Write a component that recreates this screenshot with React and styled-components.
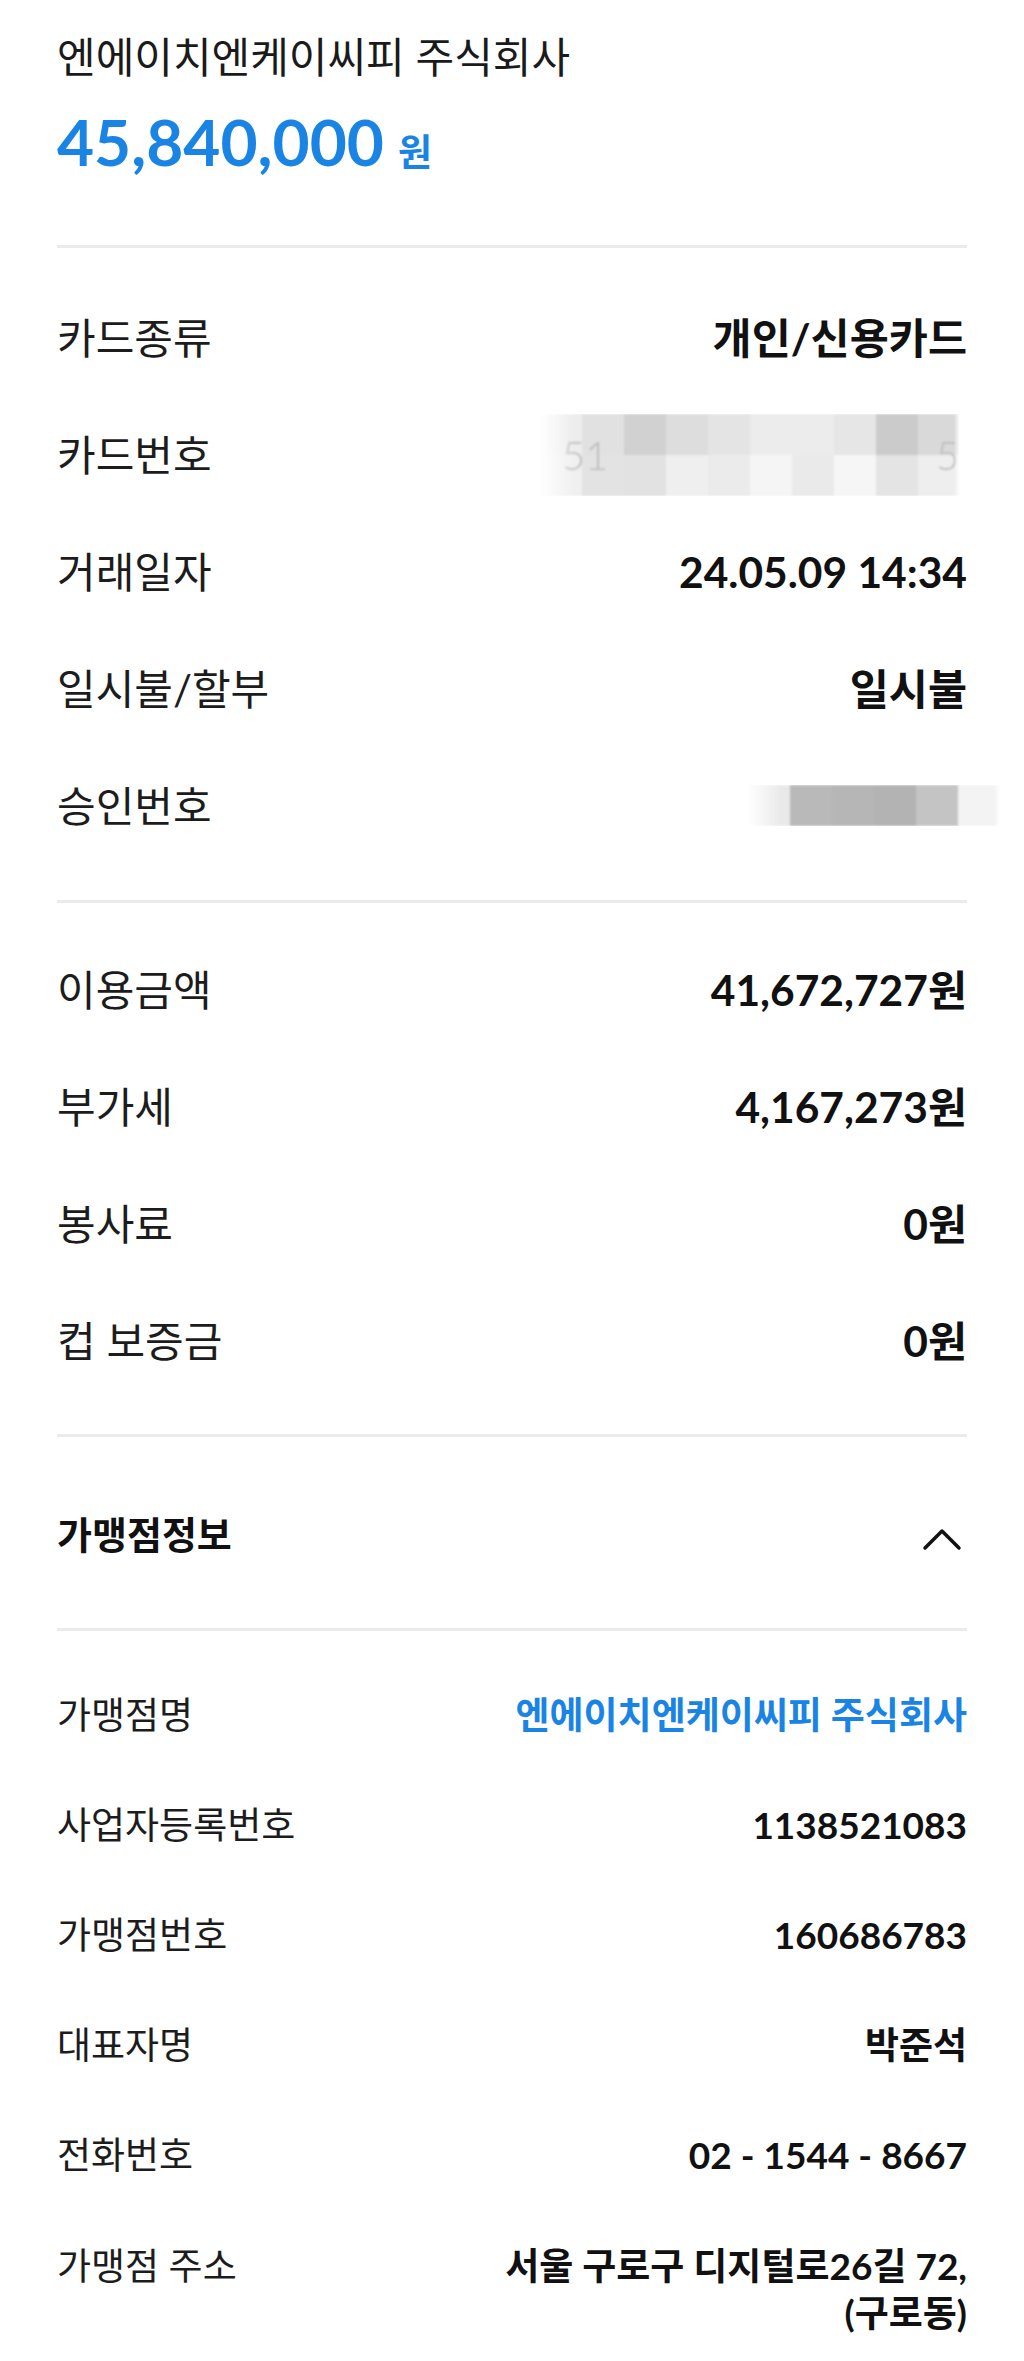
import React from 'react';
import styled, { createGlobalStyle } from 'styled-components';

const GlobalStyle = createGlobalStyle`
  body {
    margin: 0;
    background: #fff;
  }
  * { box-sizing: border-box; }
`;

const BLUE = '#1a84e5';

// blurred tiles that hide the card / approval numbers
const cardTiles = [
  ['#ededed', '#e1e1e1', '#d1d1d1', '#dddddd', '#e4e4e4', '#ececec', '#ececec', '#e6e6e6', '#cbcbcb', '#d9d9d9'],
  ['#f0f0f0', '#e3e3e3', '#e2e2e2', '#efefef', '#ebebeb', '#f5f5f5', '#eaeaea', '#f6f6f6', '#e4e4e4', '#eeeeee'],
];
const approvalTiles = [['#e9e9e9', '#b9b9b9', '#b6b6b6', '#b3b3b3', '#c4c4c4', '#f3f3f3']];

const payment = [
  { label: '카드종류', value: '개인/신용카드' },
  { label: '카드번호', mosaic: 'card' },
  { label: '거래일자', value: '24.05.09 14:34' },
  { label: '일시불/할부', value: '일시불' },
  { label: '승인번호', mosaic: 'approval' },
];

const amounts = [
  { label: '이용금액', value: '41,672,727원' },
  { label: '부가세', value: '4,167,273원' },
  { label: '봉사료', value: '0원' },
  { label: '컵 보증금', value: '0원' },
];

const merchant = [
  { label: '가맹점명', value: '엔에이치엔케이씨피 주식회사', blue: true },
  { label: '사업자등록번호', value: '1138521083' },
  { label: '가맹점번호', value: '160686783' },
  { label: '대표자명', value: '박준석' },
  { label: '전화번호', value: '02 - 1544 - 8667' },
  { label: '가맹점 주소', value: '서울 구로구 디지털로26길 72,\n(구로동)', top: true },
];

function Mosaic({ kind }) {
  const rows = kind === 'card' ? cardTiles : approvalTiles;
  return (
    <MosaicBox $cols={rows[0].length} $shift={kind === 'card' ? 7 : -33}>
      {rows.flat().map((c, i) => (
        <Tile key={i} $c={c} />
      ))}
      {kind === 'card' && (
        <>
          <Ghost $left={22}>51</Ghost>
          <Ghost $left={396}>5</Ghost>
        </>
      )}
    </MosaicBox>
  );
}

function InfoRows({ items, big }) {
  return items.map((it) => (
    <Row key={it.label} $pitch={big ? 117 : 110} $top={it.top}>
      <Label $big={big}>{it.label}</Label>
      {it.mosaic ? (
        <Mosaic kind={it.mosaic} />
      ) : (
        <Value $big={big} $blue={it.blue}>{it.value}</Value>
      )}
    </Row>
  ));
}

export default function App() {
  return (
    <>
      <GlobalStyle />
      <Page>
        <Head>
          <Store>엔에이치엔케이씨피 주식회사</Store>
          <Amount>
            45,840,000<Won>원</Won>
          </Amount>
        </Head>
        <Rule />
        <Section $pad="31px 0 36px">
          <InfoRows items={payment} big />
        </Section>
        <Rule />
        <Section $pad="28px 0 35px">
          <InfoRows items={amounts} big />
        </Section>
        <Rule />
        <Toggle>
          <ToggleTitle>가맹점정보</ToggleTitle>
          <Chevron viewBox="0 0 40 24">
            <path d="M3 21 L20 4 L37 21" />
          </Chevron>
        </Toggle>
        <Rule />
        <Section $pad="28px 0 40px">
          <InfoRows items={merchant} />
        </Section>
      </Page>
    </>
  );
}

const Page = styled.div`
  font-family: Lato, "Noto Sans CJK KR", sans-serif;
  color: #111;
  background: #fff;
  padding: 0 57px;
  min-height: 2361px;
`;

const Head = styled.header`
  padding: 30px 0 58px;
`;

const Store = styled.div`
  font-size: 42px;
  line-height: 54px;
  font-weight: 400;
  color: #1a1a1a;
`;

const Amount = styled.div`
  display: flex;
  align-items: baseline;
  gap: 14px;
  margin-top: 23px;
  font-size: 64px;
  line-height: 70px;
  font-weight: 700;
  color: ${BLUE};
`;

const Won = styled.span`
  font-size: 37px;
`;

const Rule = styled.hr`
  border: 0;
  height: 3px;
  margin: 0;
  background: #ebebeb;
`;

const Section = styled.section`
  padding: ${(p) => p.$pad};
`;

const Row = styled.div`
  display: flex;
  justify-content: space-between;
  align-items: ${(p) => (p.$top ? 'flex-start' : 'center')};
  min-height: ${(p) => p.$pitch}px;
  padding-top: ${(p) => (p.$top ? '33px' : '0')};
`;

const Label = styled.span`
  font-size: ${(p) => (p.$big ? 42 : 37)}px;
  line-height: ${(p) => (p.$big ? 50 : 47)}px;
  font-weight: 400;
  color: #1c1c1c;
  white-space: nowrap;
`;

const Value = styled.span`
  font-size: ${(p) => (p.$big ? 42.5 : 37)}px;
  line-height: ${(p) => (p.$big ? 50 : 47)}px;
  font-weight: 700;
  color: ${(p) => (p.$blue ? BLUE : '#111')};
  text-align: right;
  white-space: pre-line;
`;

const MosaicBox = styled.div`
  position: relative;
  display: grid;
  grid-template-columns: repeat(${(p) => p.$cols}, 42px);
  grid-auto-rows: 41px;
  margin-right: ${(p) => p.$shift}px;
  filter: blur(1px);
  -webkit-mask-image: linear-gradient(to right, transparent 0, #000 34px, #000 calc(100% - 6px), transparent 100%);
  mask-image: linear-gradient(to right, transparent 0, #000 34px, #000 calc(100% - 6px), transparent 100%);
`;

const Tile = styled.div`
  background: ${(p) => p.$c};
`;

const Ghost = styled.span`
  position: absolute;
  left: ${(p) => p.$left}px;
  top: 50%;
  transform: translateY(-50%);
  font-size: 40px;
  font-weight: 300;
  color: #bdbdbd;
  line-height: 1;
`;

const Toggle = styled.div`
  display: flex;
  justify-content: space-between;
  align-items: center;
  height: 191px;
`;

const ToggleTitle = styled.span`
  font-size: 38px;
  font-weight: 700;
  color: #111;
`;

const Chevron = styled.svg`
  width: 40px;
  height: 24px;
  margin: 12px 5px 0 0;
  fill: none;
  stroke: #111;
  stroke-width: 3.5;
  stroke-linecap: round;
  stroke-linejoin: round;
`;
